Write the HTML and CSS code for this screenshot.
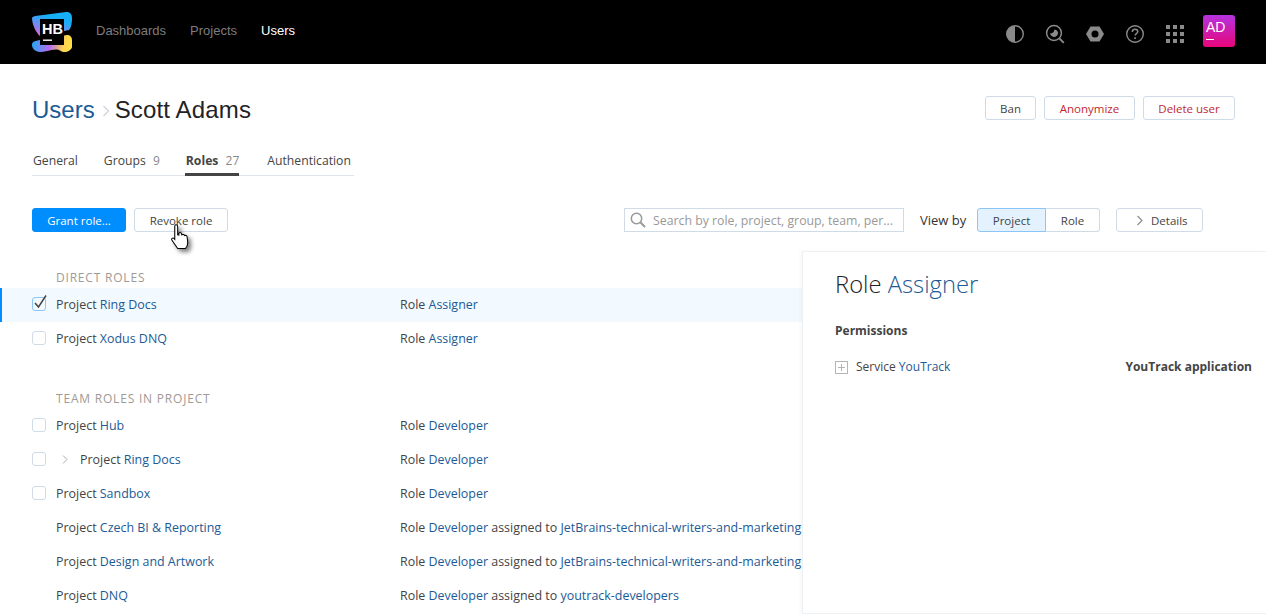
FILE: index.html
```html
<!DOCTYPE html>
<html lang="en">
<head>
<meta charset="utf-8">
<title>Scott Adams - Users</title>
<link rel="stylesheet" href="styles.css">
</head>
<body>
<header class="topbar">
  <svg class="logo" width="40" height="40" viewBox="0 0 40 40">
    <defs>
      <linearGradient id="lg1" x1="0" y1="0.9" x2="0.45" y2="0">
        <stop offset="0" stop-color="#e060d8"/>
        <stop offset="0.4" stop-color="#6f8cf5"/>
        <stop offset="0.8" stop-color="#18aef5"/>
      </linearGradient>
      <linearGradient id="lg2" x1="0" y1="0.5" x2="1" y2="0.6">
        <stop offset="0" stop-color="#22a8f5"/>
        <stop offset="0.45" stop-color="#b56cf0"/>
        <stop offset="0.8" stop-color="#fcd34d"/>
        <stop offset="1" stop-color="#fde047"/>
      </linearGradient>
    </defs>
    <path fill="url(#lg1)" d="M0 6C1 4 5 3.500 11 3L34 0C38-.5 40 2 40 6 40 11 39 16 37 18L8 24C5 22 0 13 0 6z"/>
    <path fill="url(#lg2)" d="M8 28L35 23C38 23 40 25 40 28L40 35C40 38 34 41 31 40 28 39 27 37 24 37.500 18 38 12 40 8 40 4 40 0 37 0 33 0 31 .5 29 8 28z"/>
    <rect x="8" y="7" width="24" height="26" fill="#000"/>
    <text x="10" y="21.500" class="logo-text">HB</text>
    <rect x="11" y="27.500" width="9" height="1.400" fill="#fff"/>
  </svg>
  <nav class="topnav">
    <a href="#">Dashboards</a>
    <a href="#">Projects</a>
    <a href="#" class="current">Users</a>
  </nav>
  <div class="tools">
    <svg width="20" height="20" viewBox="0 0 20 20"><circle cx="10" cy="10" r="8.300" fill="none" stroke="#8a8a8a" stroke-width="1.400"/><path d="M10 1.700a8.300 8.300 0 0 0 0 16.600z" fill="#8a8a8a"/></svg>
    <svg width="20" height="20" viewBox="0 0 20 20"><circle cx="9" cy="9" r="7.400" fill="none" stroke="#8a8a8a" stroke-width="1.500"/><path d="M14.500 14.500l4.300 4.300" stroke="#8a8a8a" stroke-width="1.800"/><path d="M5 9.500c2 0 4-1 4.500-4 2.500.6 3.800 2 3.500 4-.4 2.500-2.500 3.600-4.300 3.400C7 12.700 5.500 11.500 5 9.500z" fill="#8a8a8a"/></svg>
    <svg width="20" height="20" viewBox="0 0 20 20"><path fill-rule="evenodd" fill="#8a8a8a" d="M5.500 2.500h9l4.500 7.500-4.500 7.500h-9L1 10zM10 6.500a3.500 3.500 0 1 0 0 7 3.500 3.500 0 0 0 0-7z"/></svg>
    <svg width="20" height="20" viewBox="0 0 20 20"><circle cx="10" cy="10" r="8.300" fill="none" stroke="#8a8a8a" stroke-width="1.400"/><path d="M7.300 8c0-1.700 1.200-2.700 2.800-2.700 1.600 0 2.700 1 2.700 2.300 0 2-2.700 2-2.700 4" fill="none" stroke="#8a8a8a" stroke-width="1.500"/><rect x="9.200" y="13.300" width="1.700" height="1.700" fill="#8a8a8a"/></svg>
    <svg width="20" height="20" viewBox="0 0 20 20" fill="#8a8a8a"><rect x="1" y="1" width="4" height="4"/><rect x="8" y="1" width="4" height="4"/><rect x="15" y="1" width="4" height="4"/><rect x="1" y="8" width="4" height="4"/><rect x="8" y="8" width="4" height="4"/><rect x="15" y="8" width="4" height="4"/><rect x="1" y="15" width="4" height="4"/><rect x="8" y="15" width="4" height="4"/><rect x="15" y="15" width="4" height="4"/></svg>
    <div class="avatar">AD<span class="avatar-line"></span></div>
  </div>
</header>

<main class="page">
  <div class="title-row">
    <h1><a href="#">Users</a><svg class="crumb" width="8" height="14" viewBox="0 0 8 14"><path d="M1.500 2l5 5-5 5" fill="none" stroke="#ccd3da" stroke-width="1.200"/></svg><span class="user-name">Scott Adams</span></h1>
    <div class="actions">
      <button class="btn ban">Ban</button>
      <button class="btn danger anonymize">Anonymize</button>
      <button class="btn danger delete">Delete user</button>
    </div>
  </div>

  <div class="tabs">
    <a href="#" class="tab">General</a>
    <a href="#" class="tab">Groups <small>9</small></a>
    <a href="#" class="tab active"><b>Roles</b> <small>27</small></a>
    <a href="#" class="tab">Authentication</a>
  </div>

  <div class="toolbar">
    <button class="btn primary">Grant role...</button>
    <button class="btn revoke">Revoke role</button>
    <div class="search">
      <svg width="16" height="16" viewBox="0 0 16 16"><circle cx="6.500" cy="6.500" r="5.200" fill="none" stroke="#999" stroke-width="1.500"/><path d="M10.500 10.500l4.500 4.500" stroke="#999" stroke-width="2"/></svg>
      <span>Search by role, project, group, team, per...</span>
    </div>
    <span class="viewby">View by</span>
    <div class="segments">
      <button class="seg on">Project</button>
      <button class="seg">Role</button>
    </div>
    <button class="btn details"><svg width="6" height="11" viewBox="0 0 6 11"><path d="M.5 1l4.500 4.500L.5 10" fill="none" stroke="#888" stroke-width="1.100"/></svg>Details</button>
  </div>

  <section class="roles direct">
    <h2>DIRECT ROLES</h2>
    <div class="row selected">
      <span class="box checked"><svg width="18" height="18" viewBox="0 0 18 18"><path d="M4 9l3.500 4L15 1.500" fill="none" stroke="#444" stroke-width="1.500"/></svg></span>
      <div class="cell-project">Project <a href="#">Ring Docs</a></div>
      <div class="cell-role">Role <a href="#">Assigner</a></div>
    </div>
    <div class="row">
      <span class="box"></span>
      <div class="cell-project">Project <a href="#">Xodus DNQ</a></div>
      <div class="cell-role">Role <a href="#">Assigner</a></div>
    </div>
  </section>

  <section class="roles team">
    <h2>TEAM ROLES IN PROJECT</h2>
    <div class="row">
      <span class="box"></span>
      <div class="cell-project">Project <a href="#">Hub</a></div>
      <div class="cell-role">Role <a href="#">Developer</a></div>
    </div>
    <div class="row">
      <span class="box"></span>
      <div class="cell-project nested"><svg width="6" height="9" viewBox="0 0 6 9"><path d="M1 .5l4 4-4 4" fill="none" stroke="#aaa" stroke-width="1"/></svg>Project <a href="#">Ring Docs</a></div>
      <div class="cell-role">Role <a href="#">Developer</a></div>
    </div>
    <div class="row">
      <span class="box"></span>
      <div class="cell-project">Project <a href="#">Sandbox</a></div>
      <div class="cell-role">Role <a href="#">Developer</a></div>
    </div>
    <div class="row">
      <span class="nobox"></span>
      <div class="cell-project">Project <a href="#">Czech BI &amp; Reporting</a></div>
      <div class="cell-role">Role <a href="#">Developer</a> assigned to <a href="#">JetBrains-technical-writers-and-marketing</a></div>
    </div>
    <div class="row">
      <span class="nobox"></span>
      <div class="cell-project">Project <a href="#">Design and Artwork</a></div>
      <div class="cell-role">Role <a href="#">Developer</a> assigned to <a href="#">JetBrains-technical-writers-and-marketing</a></div>
    </div>
    <div class="row">
      <span class="nobox"></span>
      <div class="cell-project">Project <a href="#">DNQ</a></div>
      <div class="cell-role">Role <a href="#">Developer</a> assigned to <a href="#">youtrack-developers</a></div>
    </div>
  </section>
</main>

<aside class="sidepanel">
  <h3>Role <a href="#">Assigner</a></h3>
  <h4>Permissions</h4>
  <div class="perm">
    <span class="plus"></span>
    <span class="perm-name">Service <a href="#">YouTrack</a></span>
    <b class="perm-app">YouTrack application</b>
  </div>
</aside>

<svg class="cursor" width="26" height="33" viewBox="0 0 22 28">
  <path d="M5 1.500c1 0 1.500.7 1.500 1.500v7l1 .2V8.500c1.200-.7 2-.3 2.300.5l.2 1c1-.6 2-.3 2.300.7.900-.4 2-.1 2.200 1l.5 5c0 2.500-1 4-2 5H6.500L1.500 14.500c-.6-1.200.6-2.300 1.800-1.500l.7.800V3c0-.8.300-1.500 1-1.500z" fill="#fff" stroke="#000" stroke-width="0.900"/>
</svg>
</body>
</html>
```

FILE: styles.css
```css
html, body {
    margin: 0;
    height: 614px;
    overflow: hidden;
}
body {
    background: #fff;
    color: #444;
    font-family: "Open Sans", "Noto Sans", sans-serif;
    font-size: 12px;
    position: relative;
}
a {
    color: #1c5a96;
    text-decoration: none;
}
button {
    font: inherit;
    cursor: pointer;
}

.topbar {
    height: 64px;
    background: #000;
    display: flex;
    align-items: center;
    padding: 0 31px 0 32px;
}
.logo-text {
    font-family: "Liberation Sans", sans-serif;
    font-weight: bold;
    font-size: 14.500px;
    fill: #fff;
}
.topnav {
    display: flex;
    gap: 24px;
    margin-left: 24px;
    margin-bottom: 4px;
    font-family: "Liberation Sans", sans-serif;
    font-size: 13px;
}
.topnav a {
    color: #7d7d7d;
}
.topnav a.current {
    color: #fff;
}
.tools {
    display: flex;
    align-items: center;
    gap: 20px;
    margin-left: auto;
}
.tools svg {
    margin-top: 4px;
}
.avatar {
    width: 32px;
    height: 32px;
    margin-bottom: 2px;
    margin-left: -2px;
    border-radius: 3px;
    background: linear-gradient(#b533e0, #e8057a);
    color: #fff;
    font-family: "Liberation Sans", sans-serif;
    font-size: 14px;
    line-height: 24px;
    padding-left: 3px;
    box-sizing: border-box;
    position: relative;
}
.avatar-line {
    position: absolute;
    left: 3px;
    top: 24px;
    width: 8px;
    height: 1px;
    background: #fff;
}

.page {
    padding: 0 0 0 32px;
}
.title-row {
    display: flex;
    justify-content: space-between;
    align-items: center;
    padding: 32px 31px 0 0;
}
h1 {
    margin: 0;
    font-family: "Liberation Sans", sans-serif;
    font-weight: normal;
    font-size: 24px;
    line-height: 28px;
    color: #1f2326;
    display: flex;
    align-items: center;
}
.crumb {
    margin: 2px 5px 0 7px;
}
.user-name {
    letter-spacing: 0.15px;
}
.actions {
    display: flex;
    gap: 8px;
    margin-bottom: 4px;
}
.btn {
    height: 24px;
    box-sizing: border-box;
    background: #fff;
    border: 1px solid #cfdbe6;
    border-radius: 3px;
    color: #444;
    font-size: 11.500px;
    padding: 0;
    line-height: 21px;
}
.btn.ban {
    width: 51px;
}
.btn.anonymize {
    width: 91px;
}
.btn.delete {
    width: 92px;
}
.btn.danger {
    color: #c22731;
}
.btn.primary, .btn.revoke {
    width: 94px;
}
.btn.primary {
    background: #008eff;
    border-color: #008eff;
    color: #fff;
}

.tabs {
    display: flex;
    width: 322px;
    margin-top: 27px;
    border-bottom: 1px solid #dfe5eb;
    height: 24px;
    font-size: 12.200px;
    white-space: nowrap;
}
.tab {
    color: #444;
    margin-right: 24px;
    padding: 0 1px;
    height: 25px;
    box-sizing: border-box;
    line-height: 20px;
}
.tab small {
    font-size: 12px;
    color: #888;
    margin-left: 4px;
}
.tab.active {
    border-bottom: 3px solid #444;
    padding-right: 0;
    margin-right: 27px;
}

.toolbar {
    display: flex;
    align-items: center;
    margin-top: 32px;
}
.btn.revoke {
    margin-left: 8px;
}
.search {
    margin-left: 396px;
    width: 280px;
    height: 24px;
    box-sizing: border-box;
    border: 1px solid #cfdbe6;
    display: flex;
    align-items: center;
    gap: 7px;
    padding-left: 5px;
    color: #999;
    font-size: 12.300px;
}
.viewby {
    margin-left: 16px;
    width: 46px;
    color: #333;
    font-size: 13px;
    white-space: nowrap;
}
.segments {
    display: flex;
    margin-left: 11px;
}
.seg {
    height: 24px;
    border: 1px solid #cfdbe6;
    background: #fff;
    color: #444;
    font-size: 11.500px;
    padding: 0;
    width: 69px;
}
.seg:first-child {
    border-radius: 3px 0 0 3px;
}
.seg:last-child {
    border-radius: 0 3px 3px 0;
    border-left: 0;
    width: 54px;
}
.seg.on {
    background: #e3f2fe;
    border-color: #8cc5f7;
}
.btn.details {
    margin-left: 16px;
    width: 87px;
    padding: 0 0 0 20px;
    display: flex;
    align-items: center;
    gap: 8px;
}

.roles {
    font-size: 12.450px;
}
.roles h2 {
    margin: 0 0 2px;
    padding-left: 24px;
    font-size: 12px;
    font-weight: normal;
    letter-spacing: 0.8px;
    color: #a09a94;
    line-height: 16px;
}
.direct {
    margin-top: 38px;
}
.direct .row {
    padding-bottom: 2px;
}
.team {
    margin-top: 35px;
}
.team h2 {
    margin-bottom: 1px;
}
.row {
    height: 34px;
    margin-left: -32px;
    padding-left: 32px;
    display: flex;
    align-items: center;
    box-sizing: border-box;
    white-space: nowrap;
}
.row.selected {
    background: #f2f9ff;
    box-shadow: inset 2px 0 0 #008eff;
}
.box, .nobox {
    width: 14px;
    height: 14px;
    flex: none;
    box-sizing: border-box;
    margin-right: 10px;
    position: relative;
}
.box {
    border: 1px solid #cfdbe6;
    border-radius: 3px;
}
.box.checked {
    border-color: #8cc5f7;
}
.box svg {
    position: absolute;
    left: -2px;
    top: -4px;
}
.cell-project {
    width: 344px;
    flex: none;
    color: #444;
}
.cell-project.nested svg {
    margin: 0 12px 0 6px;
}

.sidepanel {
    position: absolute;
    left: 802px;
    top: 251px;
    right: 0;
    bottom: 0;
    background: #fff;
    border: 1px solid #eef1f4;
    border-right: 0;
    box-shadow: -2px 0 4px rgba(0, 0, 0, 0.03);
    padding: 0 14px 0 32px;
    color: #444;
}
.sidepanel h3 {
    margin: 16px 0 0;
    font-weight: 300;
    font-size: 23.800px;
    line-height: 32px;
    color: #1f2326;
}
.sidepanel h4 {
    margin: 23px 0 0;
    font-size: 12px;
    font-weight: bold;
    line-height: 16px;
}
.perm {
    display: flex;
    align-items: center;
    margin-top: 19px;
}
.plus {
    width: 13px;
    height: 13px;
    box-sizing: border-box;
    border: 1px solid #b5b5b5;
    margin-right: 8px;
    margin-top: 2px;
    background:
        linear-gradient(#b5b5b5, #b5b5b5) center / 7px 1px no-repeat,
        linear-gradient(#b5b5b5, #b5b5b5) center / 1px 7px no-repeat;
}
.perm-app {
    margin-left: auto;
}
.cursor {
    position: absolute;
    left: 170px;
    top: 223px;
    filter: drop-shadow(3px 3px 2px rgba(0, 0, 0, 0.5));
}
```
